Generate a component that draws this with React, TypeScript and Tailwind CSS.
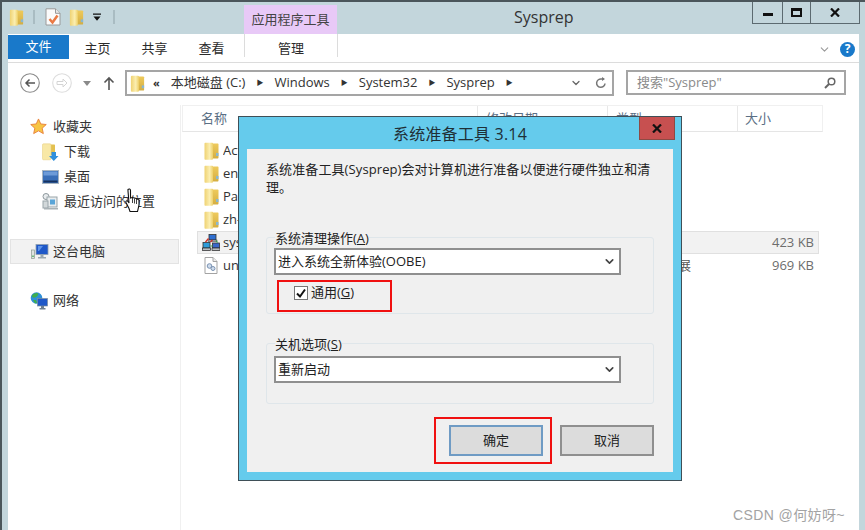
import { ChevronDown } from 'lucide-react';

const Folder = ({ className = '' }: { className?: string }) => (
  <svg viewBox="0 0 15 18" className={className}>
    <defs>
      <linearGradient id="folderFront" x1="0" y1="0" x2="1" y2="0">
        <stop offset="0" stopColor="#efd272" />
        <stop offset="0.6" stopColor="#fbeeb0" />
        <stop offset="1" stopColor="#edcf68" />
      </linearGradient>
      <linearGradient id="folderBack" x1="0" y1="0" x2="0" y2="1">
        <stop offset="0" stopColor="#eeca5c" />
        <stop offset="1" stopColor="#d4ae42" />
      </linearGradient>
    </defs>
    <path d="M8 1.500h5.500c.6 0 1 .4 1 1v13c0 .5-.4 1-1 1H8z" fill="url(#folderBack)" />
    <path d="M1.500 .8h6.500c.6 0 1 .4 1 1V17c0 .5-.4.8-1 .8H1.500c-.6 0-1-.4-1-1V1.800c0-.6.4-1 1-1z" fill="url(#folderFront)" />
    <path d="M12 11h2.500v3H12z" fill="#8ab7cf" />
  </svg>
);

const SelectBox = ({ value }: { value: string }) => (
  <div className="flex h-[27px] w-[347px] items-center justify-between border-2 border-[#8f8f8f] bg-white pl-[2px] pr-[3px] text-[13px] text-[#222]">
    <span>{value}</span>
    <ChevronDown size={13} strokeWidth={3} className="text-[#444]" />
  </div>
);

const NavItem = ({ icon, label, indent }: { icon: React.ReactNode; label: string; indent?: boolean }) => (
  <div className={`flex h-[25px] items-center ${indent ? 'pl-[34px]' : 'pl-[22px]'}`}>
    <div className={`flex h-[18px] items-center ${indent ? 'w-[22px]' : 'w-[23px]'}`}>{icon}</div>
    <span>{label}</span>
  </div>
);

const Computer = () => (
  <svg viewBox="0 0 18 16" className="h-4 w-[18px]">
    <rect x="0.500" y="6" width="3" height="8.500" fill="#dfe3e0" stroke="#8b9a90" strokeWidth="0.700" />
    <rect x="1.200" y="11.500" width="1.600" height="1.500" fill="#58b368" />
    <rect x="5" y="0.500" width="12" height="10" fill="#1f58c8" stroke="#8fa0ad" strokeWidth="0.800" />
    <path d="M7 2h5l-4 5H7z" fill="#5d93ea" />
    <path d="M9.500 10.500h3V13H15v1.500H7V13h2.500z" fill="#9aa8b0" />
  </svg>
);

const Network = () => (
  <svg viewBox="0 0 18 18" className="h-[18px] w-[18px]">
    <circle cx="6.500" cy="6" r="5.800" fill="#2f8fd8" />
    <path d="M2 3.500C4 1 7 .5 8 1.500S7 5 5 5.500 1.500 5 2 3.500zM3 8l3 0 1 3-2 0.500z" fill="#3fae4d" />
    <rect x="7.500" y="6.500" width="10" height="7.500" fill="#1f58c8" stroke="#7e8f9c" strokeWidth="0.700" />
    <path d="M11 14h3v2h1.500v1.500h-6V16H11z" fill="#6f8090" />
  </svg>
);

const SysprepIcon = () => (
  <svg viewBox="0 0 18 18" className="h-[18px] w-[18px]">
    <rect x="7" y="0.500" width="7" height="5.500" fill="#2f6fd0" stroke="#333" strokeWidth="0.800" />
    <rect x="6" y="6" width="9" height="1.500" fill="#b8bdc2" stroke="#333" strokeWidth="0.500" />
    <rect x="1" y="8.500" width="7" height="5.500" fill="#2f9bd8" stroke="#333" strokeWidth="0.800" />
    <rect x="0.500" y="14" width="8" height="2.500" fill="#b8bdc2" stroke="#222" strokeWidth="0.700" />
    <rect x="10.500" y="9" width="7" height="5" fill="#3a67c8" stroke="#333" strokeWidth="0.800" />
    <rect x="10" y="14" width="8" height="2.500" fill="#b8bdc2" stroke="#222" strokeWidth="0.700" />
    <path d="M6.500 4.500L3.500 8M8.500 8l2-2" stroke="#d03028" strokeWidth="1.300" />
    <path d="M14 6.500l1.500 2M8.500 12h2" stroke="#2e9c46" strokeWidth="1.200" />
  </svg>
);

const Row = ({ name, type, size, active, icon }: { name: string; type?: string; size?: string; active?: boolean; icon: React.ReactNode }) => (
  <div className={`flex h-[23px] w-[622px] items-center border pl-[3px] pr-[3px] text-[#333] ${active ? 'border-[#e0e0e0] bg-[#f2f2f2]' : 'border-transparent'}`}>
    <div className="flex w-[20px] justify-center">{icon}</div>
    <div className="w-[390px] pl-[2px]">
      <span className="block w-[15px] overflow-hidden whitespace-nowrap">{name}</span>
    </div>
    <span className="w-[93px] whitespace-nowrap pl-[2px] text-[#555]">{type}</span>
    <span className="flex-1 pr-[1px] text-right text-[#6d6d6d]">{size}</span>
  </div>
);

const App = () => {
  return (
    <div className="relative flex h-[530px] w-[865px] flex-col overflow-hidden border-t-2 border-l-2 border-[#4b565b] bg-[#c3d6dc] font-['Open_Sans','Noto_Sans_CJK_SC',sans-serif] text-[13px] text-[#2b2b2b]">
      {/* title bar */}
      <div className="relative flex h-[32px] shrink-0 pl-[7px]">
        <div className="flex h-[30px] items-center">
          <Folder className="h-[17px] w-[15px]" />
          <div className="ml-[9px] h-[14px] w-[2px] bg-[#a9bcc2]" />
          <svg viewBox="0 0 16 18" className="ml-[10px] h-[18px] w-4">
            <path d="M1 .800h9.500L15 5.300V17H1z" fill="#fbfbfb" stroke="#9a9a9a" />
            <path d="M10.500 .800v4.500H15" fill="#e8e8e8" stroke="#9a9a9a" />
            <path d="M4.500 11l3 3.500 5-7" fill="none" stroke="#ea7a45" strokeWidth="2.500" />
          </svg>
          <Folder className="ml-[8px] h-[17px] w-[15px]" />
          <svg viewBox="0 0 8 8" className="ml-[9px] h-2 w-2">
            <path d="M0 0.500h8v1.300H0zM0.500 3.500h7L4 7.800z" fill="#111" />
          </svg>
          <div className="ml-[12px] h-[14px] w-[2px] bg-[#a9bcc2]" />
        </div>
        <div className="ml-[129px] mt-[3px] flex h-[29px] w-[93px] items-center justify-center bg-[#e8c9f7] text-[#444]">应用程序工具</div>
        <div className="ml-[177px] pt-[1px] text-[16px] leading-[28px] text-[#333]">Sysprep</div>
        <div className="absolute right-[5px] top-0 flex h-[22px] w-[108px] border border-t-0 border-[#5c6a70] bg-[#c3d6dc] text-[#111]">
          <div className="flex w-[30px] items-center justify-center border-r border-[#5c6a70]">
            <div className="mt-[3px] h-[3px] w-[10px] bg-[#111]" />
          </div>
          <div className="flex w-[28px] items-center justify-center border-r border-[#5c6a70]">
            <div className="h-[9px] w-[11px] border-2 border-t-[3px] border-[#111]" />
          </div>
          <div className="flex flex-1 items-center justify-center">
            <svg viewBox="0 0 10 9" className="h-[9px] w-[10px]">
              <path d="M1 0.500l8 8M9 0.500l-8 8" stroke="#111" strokeWidth="2.200" />
            </svg>
          </div>
        </div>
      </div>

      {/* white window body */}
      <div className="mr-[6px] ml-[6px] flex min-h-0 flex-1 flex-col bg-white">
        {/* ribbon */}
        <div className="flex h-[29px] shrink-0 items-start border-b border-[#dcdcdc] pr-[4px]">
          <div className="mt-[1px] flex h-[24px] w-[61px] items-center justify-center bg-[#1979ca] text-white">文件</div>
          <div className="flex h-[28px] w-[57px] items-center justify-center pt-[2px]">主页</div>
          <div className="flex h-[28px] w-[57px] items-center justify-center pt-[2px]">共享</div>
          <div className="flex h-[28px] w-[57px] items-center justify-center pt-[2px]">查看</div>
          <div className="ml-[4px] flex h-[23px] w-[94px] items-start justify-center border-x border-[#dcdcdc] pt-[5px]">管理</div>
          <div className="ml-auto flex h-[29px] items-center gap-[9px] pt-[1px]">
            <ChevronDown size={13} strokeWidth={2} className="text-[#999]" />
            <div className="flex h-[15px] w-[15px] items-center justify-center rounded-full bg-[#1979ca] text-[12px] font-bold text-white">?</div>
          </div>
        </div>

        {/* address row */}
        <div className="flex h-[42px] shrink-0 items-start pt-[7px] pl-[12px]">
          <div className="flex h-[26px] items-center">
            <svg viewBox="0 0 20 20" className="h-[20px] w-[20px]">
              <circle cx="10" cy="10" r="9.300" fill="#fff" stroke="#8a8a8a" strokeWidth="1.100" />
              <path d="M15 10H6M9.500 6.500L6 10l3.500 3.500" fill="none" stroke="#555" strokeWidth="1.500" />
            </svg>
            <svg viewBox="0 0 20 20" className="ml-[12px] h-[20px] w-[20px]">
              <circle cx="10" cy="10" r="9.300" fill="#fff" stroke="#ddd" strokeWidth="1.100" />
              <path d="M5 8.500h6V6l4 4-4 4v-2.500H5z" fill="none" stroke="#d4d4d4" />
            </svg>
            <svg viewBox="0 0 8 5" className="ml-[11px] h-[5px] w-2">
              <path d="M0 0h8L4 5z" fill="#8a8a8a" />
            </svg>
            <svg viewBox="0 0 12 14" className="ml-[12px] h-[14px] w-3">
              <path d="M6 14V2M1.500 6.500L6 2l4.500 4.500" fill="none" stroke="#555" strokeWidth="1.600" />
            </svg>
          </div>
          <div className="ml-[10px] flex h-[26px] w-[489px] items-center border-2 border-[#a5a5a5] pl-[3px] pr-[5px] text-[#333]">
            <Folder className="h-[17px] w-[15px]" />
            <span className="ml-[8px] mr-[11px] text-[11px] font-bold">«</span>
            <span>本地磁盘 (C:)</span>
            <span className="mx-[11px] text-[7px]">▶</span>
            <span>Windows</span>
            <span className="mx-[11px] text-[7px]">▶</span>
            <span>System32</span>
            <span className="mx-[11px] text-[7px]">▶</span>
            <span>Sysprep</span>
            <span className="mx-[11px] text-[7px]">▶</span>
            <ChevronDown size={12} strokeWidth={2.500} className="ml-auto text-[#666]" />
            <svg viewBox="0 0 12 12" className="ml-[13px] h-3 w-3">
              <path d="M10 6.500A4.200 4.200 0 1 1 6.500 2H9" fill="none" stroke="#777" strokeWidth="1.500" />
              <path d="M7 0l3 2-3 2z" fill="#777" />
            </svg>
          </div>
          <div className="ml-[12px] flex h-[25px] w-[220px] items-center justify-between border-2 border-[#a5a5a5] pl-[9px] pr-[8px] text-[#8a8a8a]">
            <span>搜索"Sysprep"</span>
            <svg viewBox="0 0 12 12" className="h-3 w-3">
              <circle cx="7.500" cy="4.500" r="3.300" fill="none" stroke="#666" strokeWidth="1.500" />
              <path d="M5 7l-4 4" stroke="#666" strokeWidth="2" />
            </svg>
          </div>
        </div>

        {/* nav + list */}
        <div className="flex min-h-0 flex-1">
          <div className="w-[173px] shrink-0 border-r border-[#f0f0f0] pt-[9px] text-[#333]">
            <NavItem
              label="收藏夹"
              icon={
                <svg viewBox="0 0 18 18" className="h-[17px] w-[17px]">
                  <path d="M9 1l2.400 5.300 5.800.6-4.300 3.900 1.200 5.700L9 13.600l-5.100 2.900 1.200-5.700L.8 6.900l5.800-.6z" fill="#f7c544" stroke="#e8813a" strokeWidth="1" />
                </svg>
              }
            />
            <NavItem
              indent
              label="下载"
              icon={
                <svg viewBox="0 0 17 18" className="h-[18px] w-[17px]">
                  <path d="M8 1.500h4c.6 0 1 .4 1 1V12H8z" fill="#e3c04f" />
                  <path d="M1.500 .8H8c.6 0 1 .4 1 1V16c0 .5-.4.8-1 .8H1.500c-.6 0-1-.4-1-1V1.800c0-.6.4-1 1-1z" fill="#f8e8a6" stroke="#e6cd78" strokeWidth="0.500" />
                  <path d="M9.500 9h4.500v4h2.500L11.800 18 7 13h2.500z" fill="#2f8fdc" />
                </svg>
              }
            />
            <NavItem
              indent
              label="桌面"
              icon={
                <svg viewBox="0 0 17 14" className="h-[14px] w-[17px]">
                  <rect x="0.500" y="0.500" width="16" height="13" fill="#3a6fb8" stroke="#a9b6c2" />
                  <rect x="1.500" y="1.500" width="14" height="4" fill="#6d9bd8" />
                  <rect x="1.500" y="10.500" width="14" height="2" fill="#16325f" />
                </svg>
              }
            />
            <NavItem
              indent
              label="最近访问的位置"
              icon={
                <svg viewBox="0 0 17 17" className="h-[17px] w-[17px]">
                  <circle cx="4" cy="3.500" r="3" fill="#e8ecee" stroke="#8d979c" />
                  <rect x="5" y="4" width="10" height="10" fill="#e8ecee" stroke="#9aa5aa" />
                  <rect x="8" y="6.500" width="5" height="5" fill="#5aa5d8" />
                  <rect x="1" y="8" width="5" height="7" fill="#d2d8da" stroke="#9aa5aa" />
                  <rect x="2" y="15" width="14" height="1.500" fill="#a9b2b6" />
                </svg>
              }
            />
            <div className="mt-[25px] ml-[2px] flex h-[25px] w-[169px] items-center border border-[#e3e3e3] bg-[#f2f2f2] pl-[20px]">
              <div className="w-[22px]">
                <Computer />
              </div>
              <span>这台电脑</span>
            </div>
            <div className="mt-[24px]">
              <NavItem label="网络" icon={<Network />} />
            </div>
          </div>

          <div className="min-w-0 flex-1 pl-[1px]">
            <div className="flex h-[27px] w-[641px] border border-[#f0f0f0] border-b-[#e5e5e5] text-[#5b6f85]">
              <div className="w-[294px] pl-[18px] leading-[25px]">名称</div>
              <div className="w-[130px] border-l border-[#e8e8e8] pl-[8px] leading-[25px]">修改日期</div>
              <div className="w-[130px] border-l border-[#e8e8e8] pl-[8px] leading-[25px]">类型</div>
              <div className="flex-1 border-l border-[#e8e8e8] pl-[7px] leading-[25px]">大小</div>
            </div>
            <div className="pl-[15px] pt-[7px]">
              <Row name="ActionFiles" icon={<Folder className="h-[18px] w-[15px]" />} />
              <Row name="en-US" icon={<Folder className="h-[18px] w-[15px]" />} />
              <Row name="Panther" icon={<Folder className="h-[18px] w-[15px]" />} />
              <Row name="zh-CN" icon={<Folder className="h-[18px] w-[15px]" />} />
              <Row active name="sysprep.exe" size="423 KB" icon={<SysprepIcon />} />
              <Row
                name="unattend.dll"
                type="应用程序扩展"
                size="969 KB"
                icon={
                  <svg viewBox="0 0 14 17" className="h-[17px] w-[14px]">
                    <path d="M1 .500h8l4 4V16.500H1z" fill="#fff" stroke="#a3a3a3" />
                    <path d="M9 .500v4h4" fill="#ececec" stroke="#a3a3a3" />
                    <circle cx="5.500" cy="9" r="2.300" fill="#cfdcec" stroke="#7b93b3" />
                    <circle cx="9" cy="11.500" r="2" fill="#cfdcec" stroke="#7b93b3" />
                  </svg>
                }
              />
            </div>
          </div>
        </div>
      </div>

      {/* dialog */}
      <div className="absolute left-[236px] top-[114px] flex h-[365px] w-[444px] flex-col border border-[#3f4f57] bg-[#65cbec] px-[8px] pb-[8px]">
        <div className="relative flex h-[32px] shrink-0 items-center justify-center pt-[2px] text-[16px] tracking-[0.2px] text-[#1f2f36]">
          系统准备工具 3.14
          <div className="absolute -right-[2px] top-0 flex h-[23px] w-[36px] items-center justify-center border border-t-0 border-[#8d4a44] bg-[#c75050]">
            <svg viewBox="0 0 10 9" className="h-[9px] w-[10px]">
              <path d="M1 0.500l8 8M9 0.500l-8 8" stroke="#111" strokeWidth="2.200" />
            </svg>
          </div>
        </div>
        <div className="flex min-h-0 flex-1 flex-col bg-[#f0f0f0] px-[19px] pt-[11px]">
          <p className="w-[392px] leading-[18px] tracking-[0.1px] text-[#222]">系统准备工具(Sysprep)会对计算机进行准备以便进行硬件独立和清理。</p>

          <div className="relative mt-[41px] h-[77px] w-[388px] rounded-[3px] border border-[#dfe6ea] pl-[7px] pt-[10px]">
            <div className="absolute -top-[9px] left-[8px] bg-[#f0f0f0] leading-[18px] text-[#222]">
              系统清理操作(<u>A</u>)
            </div>
            <SelectBox value="进入系统全新体验(OOBE)" />
            <div className="ml-[20px] mt-[8px] flex items-center gap-[3px] text-[#222]">
              <div className="flex h-[14px] w-[14px] items-center justify-center border border-[#777] bg-white">
                <svg viewBox="0 0 12 12" className="h-3 w-3">
                  <path d="M2 6.500l3 3 5-7" fill="none" stroke="#111" strokeWidth="2" />
                </svg>
              </div>
              <span>
                通用(<u>G</u>)
              </span>
            </div>
          </div>

          <div className="relative mt-[29px] h-[61px] w-[388px] rounded-[3px] border border-[#dfe6ea] pl-[7px] pt-[12px]">
            <div className="absolute -top-[9px] left-[8px] bg-[#f0f0f0] leading-[18px] text-[#222]">
              关机选项(<u>S</u>)
            </div>
            <SelectBox value="重新启动" />
          </div>

          <div className="mt-[21px] flex w-[388px] justify-end gap-[17px] text-[#222]">
            <div className="flex h-[31px] w-[94px] items-center justify-center border-2 border-[#6f9bc4] bg-[#dcdcdc]">确定</div>
            <div className="flex h-[31px] w-[94px] items-center justify-center border-2 border-[#8f8f8f] bg-[#dcdcdc]">取消</div>
          </div>
        </div>
      </div>

      {/* red marks drawn over the screenshot */}
      <div className="absolute left-[275px] top-[278px] h-[32px] w-[115px] border-2 border-[#f01010]" />
      <div className="absolute left-[432px] top-[415px] h-[47px] w-[118px] border-2 border-[#f01010]" />

      {/* hand cursor */}
      <svg viewBox="0 0 16 26" className="absolute left-[123px] top-[186px] h-[26px] w-4">
        <path d="M3 1.500c1-1 2.500-.5 2.500 1V10l2-.5 2 .5 2 .5 2.500 1.500v5l-1.500 6.500H5l-1-3-3-6c-.5-1.500 1-2.500 2-1l1 1.500L3 3z" fill="#fff" stroke="#111" strokeWidth="1.100" />
        <path d="M7.500 10v5M9.500 10.500v5M11.500 11v5" stroke="#111" strokeWidth="0.800" />
      </svg>

      {/* watermark */}
      <div className="absolute left-[731px] top-[503px] font-['Liberation_Sans','Noto_Sans_CJK_SC',sans-serif] text-[14px] tracking-[0.4px] text-[#a3a3a3]">CSDN @何妨呀~</div>
    </div>
  );
};

export default App;
